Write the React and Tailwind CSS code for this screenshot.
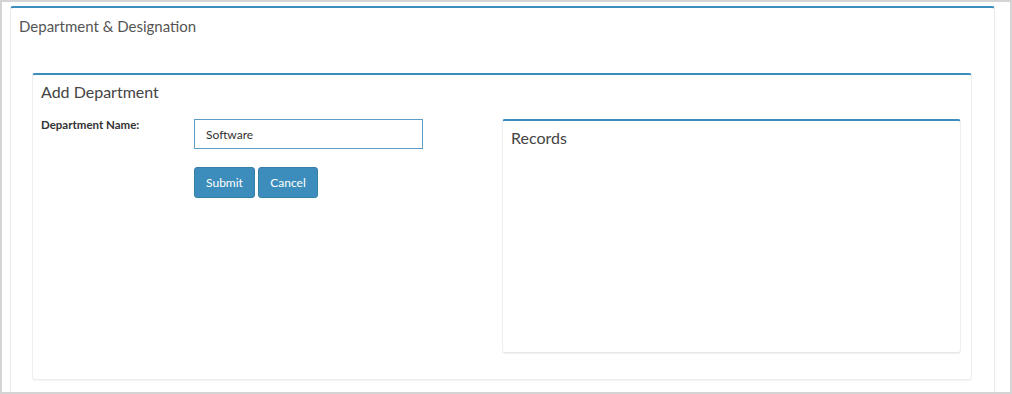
import React, { useState } from 'react';

const font = { fontFamily: 'Lato, "Open Sans", sans-serif' };

export default function App() {
    const [name, setName] = useState('Software');

    return (
        <div
            style={font}
            className="w-[1012px] h-[394px] bg-white border-2 border-[#d4d4d4] overflow-hidden pl-[8px] pr-[15px] pt-[4px]"
        >
            <div className="h-[400px] bg-white border-t-2 border-t-[#3c8dbc] border-x border-x-[#ececec] rounded-t-[3px] shadow-[0_1px_1px_rgba(0,0,0,0.08)]">
                <h1 className="text-[15px] text-[#555] pl-[8px] pt-[8px] leading-[20px]">Department &amp; Designation</h1>

                <div className="mt-[37px] ml-[21px] mr-[22px] h-[307px] border-t-2 border-x border-b border-[#eeeeee] border-t-[#3c8dbc] rounded-[3px] shadow-[0_1px_1px_rgba(0,0,0,0.05)] flex">
                    <div className="w-[470px] pl-[8px]">
                        <h2 className="text-[16px] text-[#444] pt-[7px] leading-[20px]">Add Department</h2>

                        <div className="flex mt-[14px]">
                            <label className="w-[153px] text-[11.5px] font-bold text-[#333]">Department Name:</label>
                            <div className="flex flex-col pt-[3px]">
                                <input
                                    value={name}
                                    onChange={(e) => setName(e.target.value)}
                                    className="w-[229px] h-[30px] border border-[#5d9cc6] px-[11px] text-[12px] text-[#333] outline-none"
                                    style={font}
                                />
                                <div className="flex gap-[3px] mt-[18px]">
                                    <button className="w-[61px] h-[31px] bg-[#3c8dbc] border border-[#367fa9] rounded-[3px] text-white text-[12px]">Submit</button>
                                    <button className="w-[60px] h-[31px] bg-[#3c8dbc] border border-[#367fa9] rounded-[3px] text-white text-[12px]">Cancel</button>
                                </div>
                            </div>
                        </div>
                    </div>

                    <div className="ml-[-1px] mt-[44px] w-[459px] h-[234px] border-t-2 border-t-[#3c8dbc] border-x border-b border-x-[#eeeeee] border-b-[#e6e6e6] rounded-[3px] shadow-[0_1px_1px_rgba(0,0,0,0.06)]">
                        <h2 className="text-[16px] text-[#444] pl-[8px] pt-[7px] leading-[20px]">Records</h2>
                    </div>
                </div>
            </div>
        </div>
    );
}
